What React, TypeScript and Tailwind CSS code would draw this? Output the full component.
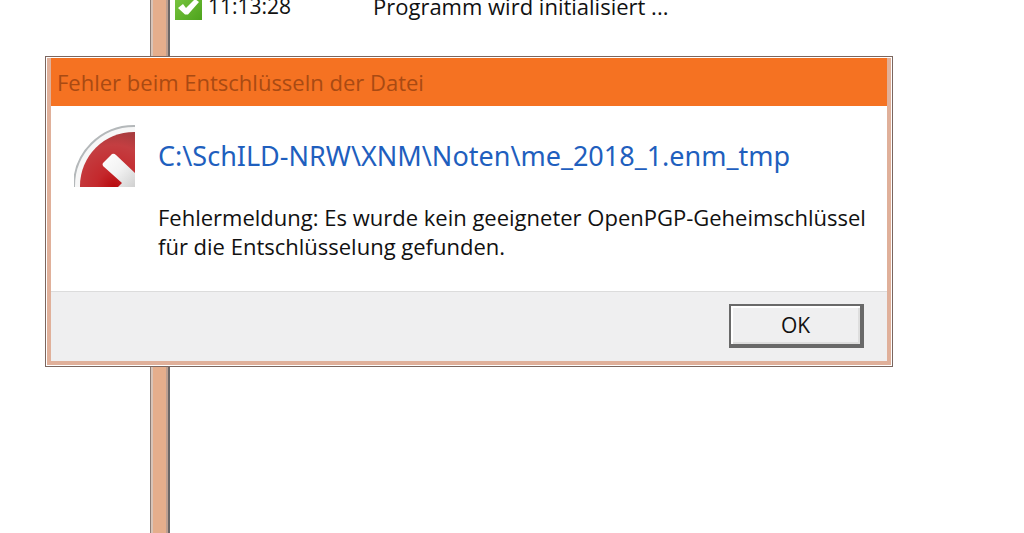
import type { ReactNode } from 'react'

function CheckIcon() {
  return (
    <svg viewBox="0 0 27 27" className="h-[27px] w-[27px] shrink-0" aria-hidden="true">
      <defs>
        <linearGradient id="check-bg" x1="0" y1="0" x2="1" y2="1">
          <stop offset="0" stopColor="#7cc843" />
          <stop offset="1" stopColor="#4da31c" />
        </linearGradient>
      </defs>
      <rect width="27" height="27" fill="url(#check-bg)" />
      <path d="M3 15 L8 11 L11 15 L20 6 L24 9 L13 21.500 L10 21.500 Z" fill="#fff" />
    </svg>
  )
}

// The error badge is larger than its slot, so only the upper left quarter shows
function ErrorIcon() {
  return (
    <svg viewBox="0 0 61 62" className="h-[62px] w-[61px] shrink-0" role="img" aria-label="Fehler">
      <defs>
        <radialGradient id="error-red" gradientUnits="userSpaceOnUse" cx="40" cy="62" r="56">
          <stop offset="0" stopColor="#b80a0e" />
          <stop offset="0.3" stopColor="#c4282c" />
          <stop offset="0.75" stopColor="#c43e41" />
          <stop offset="1" stopColor="#a83c3e" />
        </radialGradient>
        <linearGradient id="error-cross" x1="0" y1="0" x2="1" y2="1">
          <stop offset="0" stopColor="#ffffff" />
          <stop offset="0.5" stopColor="#f2f2f2" />
          <stop offset="1" stopColor="#d0d0d0" />
        </linearGradient>
      </defs>
      <circle cx="60" cy="61" r="60" fill="#f7f7f7" stroke="#b4b8ba" strokeWidth="2" />
      <circle cx="60" cy="61" r="54" fill="url(#error-red)" />
      <path d="M29 38 L38 29 Q40 28 42 30 L61 48 V62 H44 L48 58 L29 41 Q28 39 29 38 Z" fill="url(#error-cross)" />
    </svg>
  )
}

function LogRow({ time, children }: { time: string; children: ReactNode }) {
  return (
    <div className="-mt-2 flex items-center pl-[6px] leading-[28px]">
      <CheckIcon />
      <time className="w-[171px] shrink-0 pl-[6px] text-[21px]">{time}</time>
      <span className="text-[22px]">{children}</span>
    </div>
  )
}

function ErrorDialog() {
  return (
    <div
      role="alertdialog"
      aria-labelledby="dialog-title"
      aria-describedby="dialog-message"
      className="absolute left-[45px] right-[131px] top-14 border border-[#7b665f] bg-white p-px"
    >
      <div className="border-4 border-t-0 border-[#e0b09a]">
        <div className="bg-[#f57222] px-[6px] py-2">
          <h1 id="dialog-title" className="text-[22px] leading-[32px] text-[#a94a13]">
            Fehler beim Entschlüsseln der Datei
          </h1>
        </div>

        <div className="flex gap-[23px] pb-[30px] pl-[23px] pr-3 pt-[19px]">
          <ErrorIcon />
          <div className="min-w-0">
            <h2 className="pt-[13px] font-['Noto_Sans','Open_Sans',sans-serif] text-[27px] leading-[36px] text-[#1f5fbe]">
              C:\SchILD-NRW\XNM\Noten\me_2018_1.enm_tmp
            </h2>
            <p id="dialog-message" className="pt-[29px] text-[22px] leading-[29px]">
              Fehlermeldung: Es wurde kein geeigneter OpenPGP-Geheimschlüssel
              <br />
              für die Entschlüsselung gefunden.
            </p>
          </div>
        </div>

        <div className="flex justify-end border-t border-[#dcdcdc] bg-[#efeff0] pb-[13px] pl-6 pr-[23px] pt-3">
          <button
            type="button"
            className="h-11 w-[135px] border-2 border-b-4 border-r-4 border-[#696969] bg-[#efeff0] text-[21px] leading-[28px] shadow-[inset_2px_2px_0_#fff,inset_-2px_-2px_0_#dedede]"
          >
            OK
          </button>
        </div>
      </div>
    </div>
  )
}

export default function App() {
  return (
    <div className="relative flex min-h-screen overflow-hidden bg-white font-['Open_Sans','Noto_Sans',sans-serif] text-[#111]">
      <div className="w-[150px] shrink-0" />

      {/* Left frame of the program window */}
      <div className="w-5 shrink-0 border-l border-r-2 border-l-[#8b7d76] border-r-[#6b6767] bg-[#e5ae8c] shadow-[inset_2px_0_0_#d8c4b8,inset_-2px_0_0_#bd9f90]" />

      <main className="-ml-px min-w-0 flex-1">
        <LogRow time="11:13:28">Programm wird initialisiert ...</LogRow>
      </main>

      <ErrorDialog />
    </div>
  )
}
